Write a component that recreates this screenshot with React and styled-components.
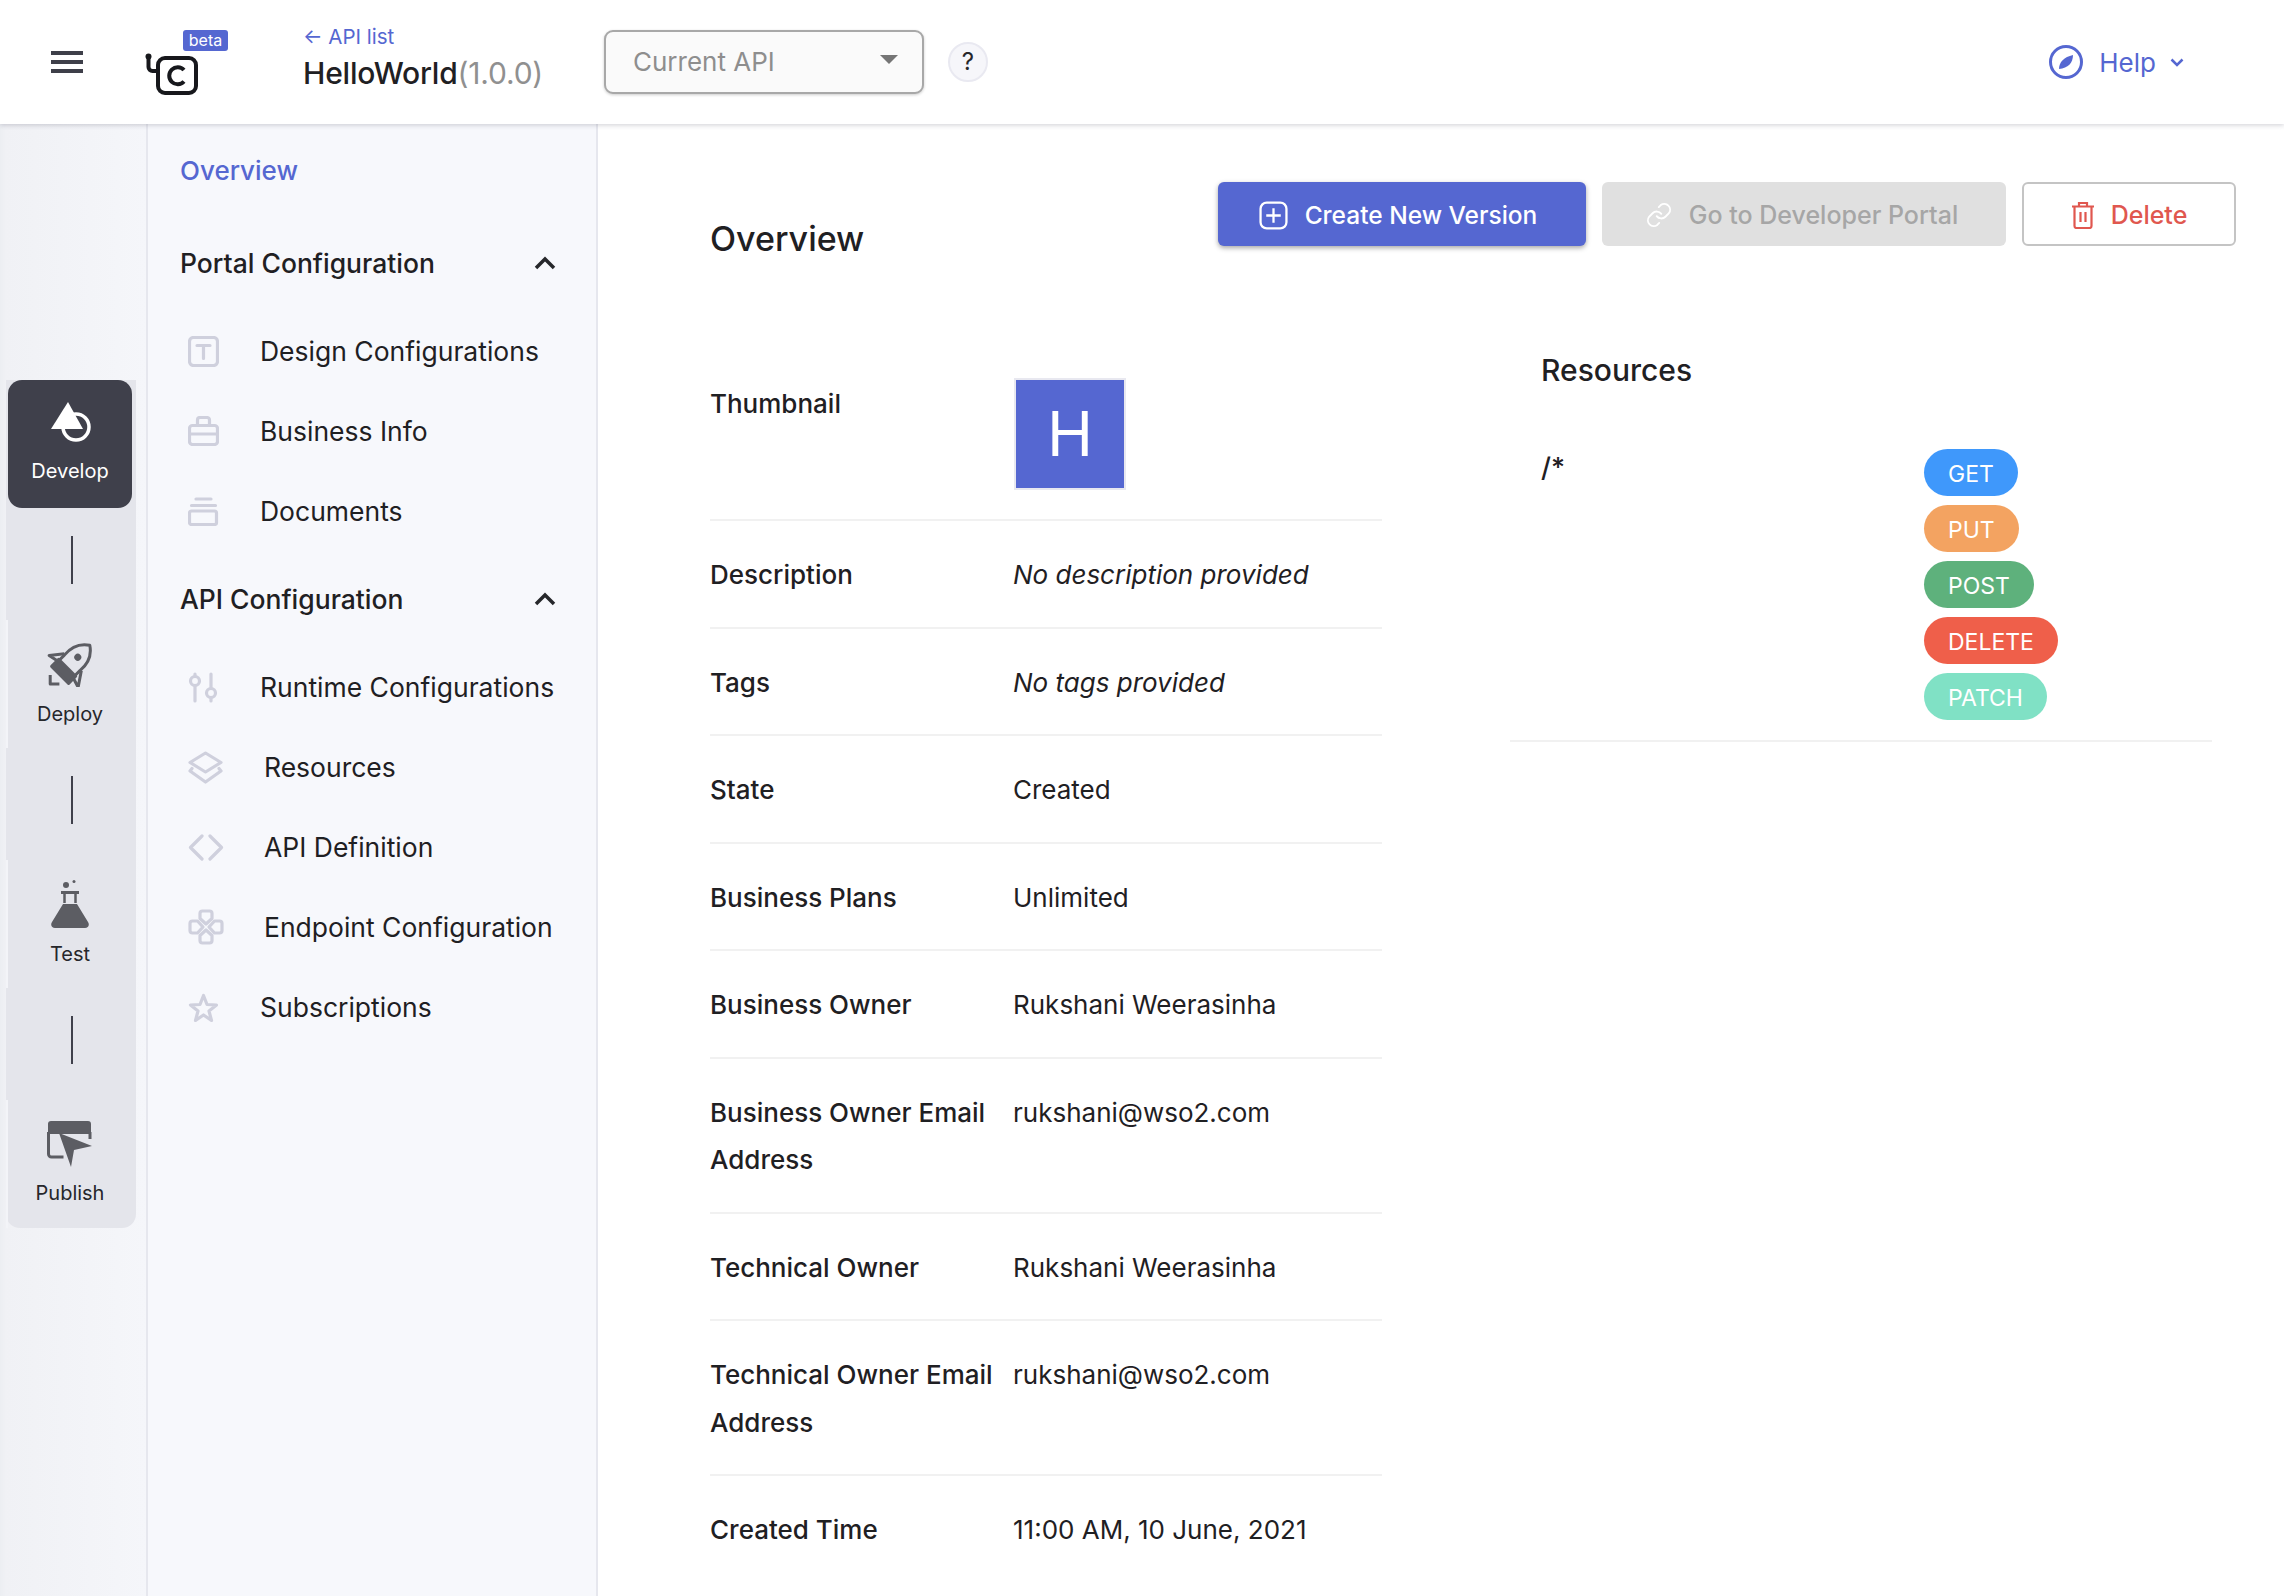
import React from "react";
import styled, { createGlobalStyle } from "styled-components";

const GlobalStyle = createGlobalStyle`
  html, body {
    margin: 0;
    height: 100%;
    overflow: hidden;
    background: #fff;
  }
  body {
    font-family: Inter, "Noto Sans", "Liberation Sans", sans-serif;
    color: #1f2023;
  }
  * { box-sizing: border-box; }
`;

const PRIMARY = "#5567d1";
const ICON_GREY = "#cfd0dd";

const Page = styled.div`
  height: 1596px;
  display: flex;
  flex-direction: column;
  overflow: hidden;
`;

/* header */
const Header = styled.header`
  flex: 0 0 124px;
  display: flex;
  align-items: center;
  padding: 0 100px 0 50px;
  background: #fff;
  box-shadow: 0 1px 5px rgba(30, 30, 60, 0.22);
  position: relative;
  z-index: 2;
`;
const Burger = styled.div`
  width: 32px;
  height: 22px;
  margin: 0 1px;
  display: flex;
  flex-direction: column;
  justify-content: space-between;
  span {
    display: block;
    height: 4px;
    background: #3e3f49;
  }
`;
const LogoBox = styled.div`
  position: relative;
  width: 53px;
  height: 42px;
  margin: 24px 105px 0 61px;
`;
const Beta = styled.span`
  position: absolute;
  left: 38px;
  top: -23px;
  width: 45px;
  height: 21px;
  border-radius: 3px;
  background: ${PRIMARY};
  color: #fff;
  font-size: 16px;
  line-height: 21px;
  text-align: center;
`;
const Title = styled.div`
  width: 301px;
  padding-bottom: 9px;
  display: flex;
  flex-direction: column;
  gap: 6px;
`;
const BackLink = styled.a`
  color: ${PRIMARY};
  font-size: 20.500px;
  line-height: 24px;
`;
const ApiName = styled.div`
  font-size: 30px;
  line-height: 36px;
  font-weight: 500;
  letter-spacing: -0.2px;
  small {
    font-size: inherit;
    font-weight: 400;
    color: #909090;
  }
`;
const SelectBox = styled.div`
  width: 320px;
  height: 64px;
  padding: 0 24px 2px 27px;
  display: flex;
  align-items: center;
  justify-content: space-between;
  border: 2px solid #a8a8a8;
  border-radius: 9px;
  background: #fafafa;
  box-shadow: 0 1px 3px rgba(0, 0, 0, 0.2);
  color: #8e8e8e;
  font-size: 26px;
  &::after {
    content: "";
    border-left: 9px solid transparent;
    border-right: 9px solid transparent;
    border-top: 9px solid #757575;
    margin-bottom: 4px;
  }
`;
const HelpDot = styled.div`
  width: 40px;
  height: 40px;
  margin-left: 24px;
  border-radius: 50%;
  border: 2px solid #e9e9f1;
  background: #f6f6fa;
  color: #26272b;
  font-size: 24px;
  line-height: 36px;
  text-align: center;
`;
const HelpMenu = styled.div`
  margin-left: auto;
  display: flex;
  align-items: center;
  color: ${PRIMARY};
  font-size: 26px;
  svg:first-child { margin-right: 16px; }
  svg:last-child { margin-left: 14px; }
`;

const Body = styled.div`
  flex: 1;
  display: flex;
  min-height: 0;
`;

/* left rail */
const Rail = styled.nav`
  flex: 0 0 148px;
  padding: 256px 0 0 6px;
  background: linear-gradient(90deg, #eceef2 0, #f0f1f5 6px, #f5f6fa 100%);
  border-right: 2px solid #e6e7ee;
`;
const RailStrip = styled.div`
  width: 130px;
  height: 848px;
  border-radius: 0 0 14px 14px;
  background: #e4e5eb;
`;
const RailItem = styled.div`
  width: 124px;
  height: 128px;
  margin-left: 2px;
  padding-top: ${(p) => p.$top}px;
  display: flex;
  flex-direction: column;
  align-items: center;
  border-radius: ${(p) => (p.$active ? "14px" : "0")};
  background: ${(p) => (p.$active ? "#3f404b" : "transparent")};
  box-shadow: ${(p) => (p.$active ? "none" : "-2px 0 0 #f3f4f8")};
  color: ${(p) => (p.$active ? "#fff" : "#26272b")};
  font-size: 20px;
  line-height: 24px;
`;
const RailIcon = styled.svg`
  display: block;
  flex: none;
  height: ${(p) => p.$h}px;
  margin-bottom: ${(p) => p.$gap}px;
`;
const RailLine = styled.div`
  height: 112px;
  padding: 28px 0 0 65px;
  &::before {
    content: "";
    display: block;
    width: 2px;
    height: 48px;
    background: #3f404b;
  }
`;

/* secondary sidebar */
const Sidebar = styled.aside`
  flex: 0 0 450px;
  padding: 24px 33px 0 32px;
  background: #f7f8fc;
  border-right: 2px solid #e6e7ee;
`;
const SideOverview = styled.div`
  height: 46px;
  line-height: 46px;
  color: ${PRIMARY};
  font-size: 26px;
  font-weight: 500;
`;
const SectionHead = styled.div`
  height: 60px;
  margin-top: ${(p) => p.$top}px;
  display: flex;
  align-items: center;
  justify-content: space-between;
  padding-right: 7px;
  font-size: 26.500px;
  font-weight: 500;
`;
const SideList = styled.ul`
  list-style: none;
  margin: 18px 0 18px;
  padding: 0;
`;
const SideRow = styled.li`
  height: 80px;
  padding-left: 8px;
  display: flex;
  align-items: center;
  font-size: 26.500px;
  white-space: nowrap;
`;
const SideIcon = styled.span`
  flex: 0 0 ${(p) => (p.$wide ? 76 : 72)}px;
  display: flex;
  align-items: center;
`;

/* main area */
const Main = styled.main`
  flex: 1;
  min-width: 0;
  padding: 58px 48px 0 112px;
  overflow: hidden;
`;
const TopRow = styled.div`
  height: 64px;
  display: flex;
  align-items: flex-start;
  margin-bottom: 94px;
`;
const PageTitle = styled.h1`
  margin: 41px auto 0 0;
  font-size: 34px;
  line-height: 32px;
  font-weight: 500;
`;
const Actions = styled.div`
  display: flex;
  gap: 16px;
`;
const ActionButton = styled.button`
  height: 64px;
  width: ${(p) => p.$w}px;
  display: flex;
  align-items: center;
  justify-content: center;
  gap: ${(p) => p.$gap || 16}px;
  padding: 2px ${(p) => p.$nudge || 0}px 0 0;
  border-radius: 6px;
  font: inherit;
  font-size: ${(p) => p.$size || 25}px;
  font-weight: 500;
  border: ${(p) => (p.$kind === "outline" ? "2px solid #c4c4c4" : "0")};
  background: ${(p) =>
    p.$kind === "primary" ? PRIMARY : p.$kind === "off" ? "#e0e0e0" : "#fff"};
  color: ${(p) =>
    p.$kind === "primary" ? "#fff" : p.$kind === "off" ? "#a6a6a6" : "#e0574f"};
  box-shadow: ${(p) =>
    p.$kind === "primary" ? "0 2px 5px rgba(0,0,0,0.35)" : "none"};
`;
const Columns = styled.div`
  display: flex;
  gap: 128px;
`;
const InfoTable = styled.div`
  flex: 0 0 672px;
  padding-top: 40px;
`;
const InfoRow = styled.div`
  display: grid;
  grid-template-columns: 303px 1fr;
  padding: ${(p) => (p.$first ? "0 0 29px" : "30px 0 28px")};
  border-bottom: 2px solid #f1f1f1;
  font-size: 26px;
  line-height: 47.5px;
  &:last-child {
    border-bottom: 0;
  }
`;
const InfoLabel = styled.div`
  font-weight: 500;
  line-height: ${(p) => (p.$first ? "48px" : "inherit")};
`;
const InfoValue = styled.div`
  font-style: ${(p) => (p.$empty ? "italic" : "normal")};
  white-space: nowrap;
`;
const Thumb = styled.div`
  width: 112px;
  height: 112px;
  margin: -2px 0 0 1px;
  display: flex;
  align-items: center;
  justify-content: center;
  border: 2px solid #e8e8f0;
  background: ${PRIMARY};
  color: #fff;
  font-size: 62px;
  font-weight: 400;
`;
const ResourcePanel = styled.section`
  flex: 0 0 702px;
  padding-top: 10px;
`;
const PanelTitle = styled.h2`
  margin: 0 0 59px 31px;
  font-size: 30px;
  line-height: 40px;
  font-weight: 500;
`;
const ResourceRow = styled.div`
  display: grid;
  grid-template-columns: 383px 1fr;
  padding: 0 0 20px 31px;
  border-bottom: 2px solid #f1f1f1;
`;
const ResourcePath = styled.div`
  font-size: 27px;
  line-height: 38px;
  font-weight: 500;
`;
const Methods = styled.div`
  display: flex;
  flex-direction: column;
  align-items: flex-start;
  gap: 9px;
`;
const MethodPill = styled.span`
  height: 47px;
  min-width: 93px;
  padding: 3px 24px 0;
  border-radius: 24px;
  background: ${(p) => p.$color};
  color: #fff;
  font-size: 23px;
  line-height: 45px;
`;

/* icons */
const Side = ({ w = 31, h = 31, children }) => (
  <svg width={w} height={h} viewBox={`0 0 ${w} ${h}`} fill="none" stroke={ICON_GREY} strokeWidth="3.200" strokeLinejoin="round" strokeLinecap="round">
    {children}
  </svg>
);

const SIDE_ICONS = {
  design: (
    <Side>
      <rect x="1.500" y="1.500" width="28" height="28" rx="4" />
      <path d="M9 9.500h13M15.500 9.500v13" />
    </Side>
  ),
  business: (
    <Side h={30}>
      <rect x="1.500" y="9.500" width="28" height="19" rx="3" />
      <path d="M9.500 9V4a2.500 2.500 0 0 1 2.500-2.500h7A2.500 2.500 0 0 1 21.500 4v5M1.500 18h28" />
    </Side>
  ),
  docs: (
    <Side h={29}>
      <rect x="1.500" y="14" width="27" height="13.500" rx="2" />
      <path d="M3.500 8.500h24M8 2h15" />
    </Side>
  ),
  runtime: (
    <Side h={31}>
      <circle cx="7" cy="9" r="4.500" />
      <path d="M7 2v2.500M7 13.500V29" />
      <circle cx="23" cy="21" r="4.500" />
      <path d="M23 2v14.500M23 25.500V29" />
    </Side>
  ),
  resources: (
    <Side w={35} h={33}>
      <path d="M17.500 2 33 11.500 17.500 21 2 11.500Z" />
      <path d="M4 17.500 2 20l15.500 11L33 20l-2-2.500" />
    </Side>
  ),
  definition: (
    <Side w={36} h={27}>
      <path d="M14 2 2.500 13.500 14 25M22 2l11.500 11.500L22 25" />
    </Side>
  ),
  endpoint: (
    <Side w={36} h={36}>
      <path d="M18 15 12 9.500V4.500A2.500 2.500 0 0 1 14.500 2h7A2.500 2.500 0 0 1 24 4.500v5Z" />
      <path d="M18 21 12 26.500v5A2.500 2.500 0 0 0 14.500 34h7a2.500 2.500 0 0 0 2.500-2.500v-5Z" />
      <path d="M15 18 9.500 12h-5A2.500 2.500 0 0 0 2 14.500v7A2.500 2.500 0 0 0 4.500 24h5Z" />
      <path d="M21 18 26.500 12h5A2.500 2.500 0 0 1 34 14.500v7a2.500 2.500 0 0 1-2.500 2.500h-5Z" />
    </Side>
  ),
  subs: (
    <Side h={29}>
      <path d="M15.500 2.500 19 11.500l9.500.5-7.500 6 2.500 9.500-8-5.500-8 5.500L10 18l-7.500-6 9.500-.5Z" />
    </Side>
  ),
};

const Chevron = () => (
  <svg width="22" height="14" viewBox="0 0 22 14" fill="none" stroke="#26272b" strokeWidth="3.500">
    <path d="M2 12 11 3l9 9" />
  </svg>
);

const DevelopIcon = () => (
  <RailIcon as="svg" $h={43} $gap={16} width="42" viewBox="0 0 42 43">
    <circle cx="27" cy="27" r="13" fill="none" stroke="#fff" strokeWidth="3.500" />
    <path d="M19 2 34 29H2Z" fill="#fff" />
  </RailIcon>
);
const RocketIcon = () => (
  <RailIcon as="svg" $h={44} $gap={15} width="46" viewBox="0 0 46 44">
    <g transform="rotate(45 23 22)" fill="none" stroke="#5c5d63" strokeWidth="3" strokeLinejoin="round">
      <path d="M23 -6C32 0 35 9 34 19V28H12V19C11 9 14 0 23 -6Z" />
      <path d="M11 26h24v10H11Z" fill="#5c5d63" />
      <circle cx="23" cy="11" r="3.500" fill="#5c5d63" stroke="none" />
      <path d="M11 18 1.500 30 11 28M35 18l9.500 14L35 29" />
      <path d="M16 43 22.500 49.500 29 43" />
    </g>
  </RailIcon>
);
const FlaskIcon = () => (
  <RailIcon as="svg" $h={49} $gap={13} width="38" viewBox="0 0 38 49">
    <circle cx="15" cy="5" r="3" fill="#5c5d63" />
    <circle cx="23" cy="1.500" r="1.500" fill="#5c5d63" />
    <rect x="10" y="11" width="18" height="3" fill="#5c5d63" />
    <path d="M13.500 14v9M24.500 14v9" stroke="#5c5d63" strokeWidth="2.500" />
    <path d="M12 24h14l11 18c2 3 0 6-3 6H4c-3 0-5-3-3-6Z" fill="#5c5d63" />
  </RailIcon>
);
const PublishIcon = () => (
  <RailIcon as="svg" $h={47} $gap={14} width="46" viewBox="0 0 46 47">
    <path d="M44 15V4a3 3 0 0 0-3-3H4a3 3 0 0 0-3 3v10h43Z" fill="#5c5d63" />
    <path d="M1.500 12v22a3 3 0 0 0 3 3h12" fill="none" stroke="#5c5d63" strokeWidth="3" />
    <path d="M43 12v7" stroke="#5c5d63" strokeWidth="3" />
    <path d="M12 13 45 26l-18 4-3 17Z" fill="#5c5d63" />
  </RailIcon>
);

const sidePortal = [
  ["design", "Design Configurations"],
  ["business", "Business Info"],
  ["docs", "Documents"],
];
const sideApi = [
  ["runtime", "Runtime Configurations"],
  ["resources", "Resources", true],
  ["definition", "API Definition", true],
  ["endpoint", "Endpoint Configuration", true],
  ["subs", "Subscriptions"],
];
const info = [
  ["Description", "No description provided", true],
  ["Tags", "No tags provided", true],
  ["State", "Created"],
  ["Business Plans", "Unlimited"],
  ["Business Owner", "Rukshani Weerasinha"],
  ["Business Owner Email Address", "rukshani@wso2.com"],
  ["Technical Owner", "Rukshani Weerasinha"],
  ["Technical Owner Email Address", "rukshani@wso2.com"],
  ["Created Time", "11:00 AM, 10 June, 2021"],
];
const methods = [
  ["GET", "#3f98fb"],
  ["PUT", "#f3a361"],
  ["POST", "#5eb17c"],
  ["DELETE", "#ef5f4a"],
  ["PATCH", "#80e1c5"],
];

function renderSideRow([icon, label, wide]) {
  return (
    <SideRow key={label}>
      <SideIcon $wide={wide}>{SIDE_ICONS[icon]}</SideIcon>
      {label}
    </SideRow>
  );
}

export default function App() {
  return (
    <Page>
      <GlobalStyle />
      <Header>
        <Burger>
          <span />
          <span />
          <span />
        </Burger>
        <LogoBox>
          <Beta>beta</Beta>
          <svg width="53" height="42" viewBox="0 0 53 42" fill="none" stroke="#17181c" strokeWidth="4">
            <circle cx="3.500" cy="3.500" r="3" fill="#17181c" stroke="none" />
            <path d="M3.500 4v10a4 4 0 0 0 4 4h6" />
            <rect x="13" y="5" width="38" height="35" rx="7" />
            <path d="M39 17a8.500 8.500 0 1 0 0 11.500" />
          </svg>
        </LogoBox>
        <Title>
          <BackLink>← API list</BackLink>
          <ApiName>
            HelloWorld<small>(1.0.0)</small>
          </ApiName>
        </Title>
        <SelectBox>Current API</SelectBox>
        <HelpDot>?</HelpDot>
        <HelpMenu>
          <svg width="34" height="34" viewBox="0 0 34 34" fill="none">
            <circle cx="17" cy="17" r="15.500" stroke={PRIMARY} strokeWidth="3" />
            <path d="M10 24c0-7 5-12 14-14 0 8-5 13-14 14Z" fill={PRIMARY} />
          </svg>
          Help
          <svg width="14" height="9" viewBox="0 0 14 9" fill="none" stroke={PRIMARY} strokeWidth="2.500">
            <path d="M1.500 1.500 7 7l5.500-5.500" />
          </svg>
        </HelpMenu>
      </Header>
      <Body>
        <Rail>
          <RailStrip>
            <RailItem $active $top={20}>
              <DevelopIcon />
              Develop
            </RailItem>
            <RailLine />
            <RailItem $top={23}>
              <RocketIcon />
              Deploy
            </RailItem>
            <RailLine />
            <RailItem $top={20}>
              <FlaskIcon />
              Test
            </RailItem>
            <RailLine />
            <RailItem $top={20}>
              <PublishIcon />
              Publish
            </RailItem>
          </RailStrip>
        </Rail>
        <Sidebar>
          <SideOverview>Overview</SideOverview>
          <SectionHead $top={39}>
            Portal Configuration
            <Chevron />
          </SectionHead>
          <SideList>{sidePortal.map(renderSideRow)}</SideList>
          <SectionHead $top={0}>
            API Configuration
            <Chevron />
          </SectionHead>
          <SideList>{sideApi.map(renderSideRow)}</SideList>
        </Sidebar>
        <Main>
          <TopRow>
            <PageTitle>Overview</PageTitle>
            <Actions>
              <ActionButton $kind="primary" $w={368} $size={24.5} $gap={17} $nudge={8}>
                <svg width="29" height="29" viewBox="0 0 28 28" fill="none" stroke="#fff" strokeWidth="2.200">
                  <rect x="1.500" y="1.500" width="25" height="25" rx="6" />
                  <path d="M14 7v14M7 14h14" />
                </svg>
                Create New Version
              </ActionButton>
              <ActionButton $kind="off" $w={404} $size={25} $nudge={5}>
                <svg width="28" height="28" viewBox="0 0 24 24" fill="none" stroke="#fff" strokeWidth="1.600" strokeLinecap="round">
                  <path d="M10 13a5 5 0 0 0 7.500.5l3-3a5 5 0 0 0-7-7l-1.700 1.700" />
                  <path d="M14 11a5 5 0 0 0-7.500-.5l-3 3a5 5 0 0 0 7 7l1.700-1.700" />
                </svg>
                Go to Developer Portal
              </ActionButton>
              <ActionButton $kind="outline" $w={214} $size={25}>
                <svg width="24" height="28" viewBox="0 0 24 28" fill="none" stroke="#e0574f" strokeWidth="2.200">
                  <path d="M1 5.500h22M8 5.500V2h8v3.500M3.500 5.500V25a2 2 0 0 0 2 2h13a2 2 0 0 0 2-2V5.500M9.500 11v10M14.500 11v10" />
                </svg>
                Delete
              </ActionButton>
            </Actions>
          </TopRow>
          <Columns>
            <InfoTable>
              <InfoRow $first>
                <InfoLabel $first>Thumbnail</InfoLabel>
                <Thumb>H</Thumb>
              </InfoRow>
              {info.map(([label, value, empty]) => (
                <InfoRow key={label}>
                  <InfoLabel>{label}</InfoLabel>
                  <InfoValue $empty={empty}>{value}</InfoValue>
                </InfoRow>
              ))}
            </InfoTable>
            <ResourcePanel>
              <PanelTitle>Resources</PanelTitle>
              <ResourceRow>
                <ResourcePath>/*</ResourcePath>
                <Methods>
                  {methods.map(([name, color]) => (
                    <MethodPill key={name} $color={color}>
                      {name}
                    </MethodPill>
                  ))}
                </Methods>
              </ResourceRow>
            </ResourcePanel>
          </Columns>
        </Main>
      </Body>
    </Page>
  );
}
